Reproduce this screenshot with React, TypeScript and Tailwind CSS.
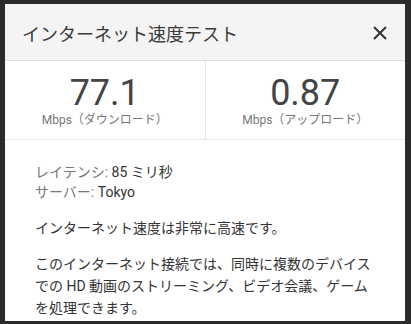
import React from "react";

export default function App() {
  const font = { fontFamily: 'Roboto, "Noto Sans CJK JP", sans-serif' };
  return (
    <div className="w-[411px] h-[324px] bg-[#2b2b2b] pt-[4px] pl-[5px] pr-[6px] pb-[3px]" style={font}>
      <div className="w-full h-full bg-white flex flex-col overflow-hidden">
        <div className="h-[57px] bg-[#f4f4f4] border-b border-[#dcdcdc] flex items-center justify-between pl-[17px] pr-[18px] pt-[6px] shrink-0">
          <span className="text-[18px] text-[#3a3a3a] leading-[24px]">インターネット速度テスト</span>
          <svg width="14" height="14" viewBox="0 0 14 14" className="mt-[-5px]">
            <path d="M1 1 L13 13 M13 1 L1 13" stroke="#333" strokeWidth="2" />
          </svg>
        </div>
        <div className="h-[79px] flex border-b border-[#e6e6e6] shrink-0">
          <div className="flex-1 flex flex-col items-center pt-[15px] border-r border-[#e6e6e6]">
            <div className="text-[36px] leading-[34px] text-[#444]">77.1</div>
            <div className="text-[12px] leading-[14px] text-[#777] mt-[3px]">Mbps（ダウンロード）</div>
          </div>
          <div className="flex-1 flex flex-col items-center pt-[15px]">
            <div className="text-[36px] leading-[34px] text-[#444]">0.87</div>
            <div className="text-[12px] leading-[14px] text-[#777] mt-[3px]">Mbps（アップロード）</div>
          </div>
        </div>
        <div className="pt-[22px] pl-[30px] pr-[30px] text-[14px] text-[#333]">
          <div className="leading-[20px]">
            <span className="text-[#777]">レイテンシ: </span>85 ミリ秒
          </div>
          <div className="leading-[20px]">
            <span className="text-[#777]">サーバー: </span>Tokyo
          </div>
          <div className="leading-[20px] mt-[16px]">インターネット速度は非常に高速です。</div>
          <div className="leading-[22px] mt-[15px]">
            このインターネット接続では、同時に複数のデバイスでの HD 動画のストリーミング、ビデオ会議、ゲームを処理できます。
          </div>
        </div>
      </div>
    </div>
  );
}
